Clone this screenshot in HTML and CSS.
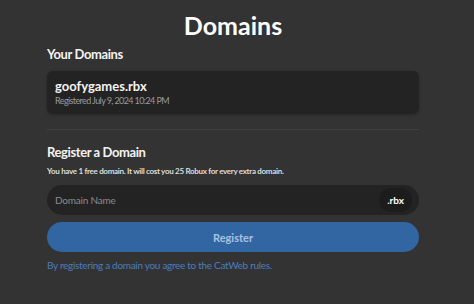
FILE: index.html
```html
<!DOCTYPE html>
<html lang="en">
<head>
  <meta charset="UTF-8" />
  <meta name="viewport" content="width=device-width, initial-scale=1.0"/>
  <title>Domains</title>
  <link rel="stylesheet" href="styles.css">
</head>
<body>

  <div class="page">
    <h1>Domains</h1>

    <h2>Your Domains</h2>
    <div class="domain-card">
      <div class="domain-name">goofygames.rbx</div>
      <div class="domain-date">Registered July 9, 2024 10:24 PM</div>
    </div>

    <hr class="divider">

    <h2 class="register-title">Register a Domain</h2>
    <p class="note">You have 1 free domain. It will cost you 25 Robux for every extra domain.</p>

    <div class="domain-input">
      <input type="text" placeholder="Domain Name">
      <span class="suffix">.rbx</span>
    </div>

    <button class="register-btn">Register</button>

    <a class="rules" href="#">By registering a domain you agree to the CatWeb rules.</a>
  </div>

</body>
</html>
```

FILE: styles.css
```css
body {
  font-family: Lato, "Noto Sans", sans-serif;
  margin: 0;
  background: #333333;
  color: #f2f2f2;
}

.page {
  width: 372px;
  margin-left: 47px;
  padding-top: 10px;
  display: flex;
  flex-direction: column;
}

h1 {
  margin: 0;
  text-align: center;
  font-size: 25px;
  font-weight: 700;
  line-height: 30px;
  color: #ffffff;
}

h2 {
  margin: 6px 0 0;
  font-size: 13px;
  font-weight: 700;
  line-height: 16px;
  letter-spacing: -0.4px;
}

.register-title {
  margin-top: 14px;
}

.domain-card {
  margin-top: 9px;
  background: #232323;
  border-radius: 6px;
  padding: 7px 8px 8px;
  box-shadow: 0 1px 3px rgba(0,0,0,0.25);
}

.domain-name {
  font-size: 13px;
  font-weight: 700;
  line-height: 16px;
}

.domain-date {
  margin-top: 1px;
  font-size: 9px;
  color: #9a9a9a;
  line-height: 11px;
  letter-spacing: -0.6px;
}

.divider {
  border: none;
  border-top: 1px solid #3f3f3f;
  margin: 15px 0 0;
  width: 100%;
}

.note {
  margin: 6px 0 0;
  font-size: 8px;
  font-weight: 700;
  color: #dddddd;
  line-height: 10px;
  letter-spacing: -0.3px;
}

.domain-input {
  margin-top: 9px;
  height: 30px;
  background: #232323;
  border-radius: 15px;
  display: flex;
  align-items: center;
  padding: 0 7px 0 8px;
}

.domain-input input {
  flex: 1;
  background: transparent;
  border: none;
  outline: none;
  font-family: inherit;
  font-size: 10px;
  letter-spacing: -0.2px;
  color: #f2f2f2;
  padding: 0;
}

.domain-input input::placeholder {
  color: #8a8a8a;
}

.suffix {
  background: #1c1c1c;
  border-radius: 12px;
  padding: 0 8px;
  height: 24px;
  line-height: 24px;
  font-size: 10px;
  font-weight: 700;
  color: #ffffff;
}

.register-btn {
  margin-top: 7px;
  height: 30px;
  border: none;
  border-radius: 15px;
  background: #3266a3;
  color: #a8c2e2;
  font-family: inherit;
  font-size: 11px;
  font-weight: 700;
}

.rules {
  margin-top: 7px;
  font-size: 10px;
  color: #4b7dc0;
  text-decoration: none;
  line-height: 12px;
  letter-spacing: -0.3px;
}
```
